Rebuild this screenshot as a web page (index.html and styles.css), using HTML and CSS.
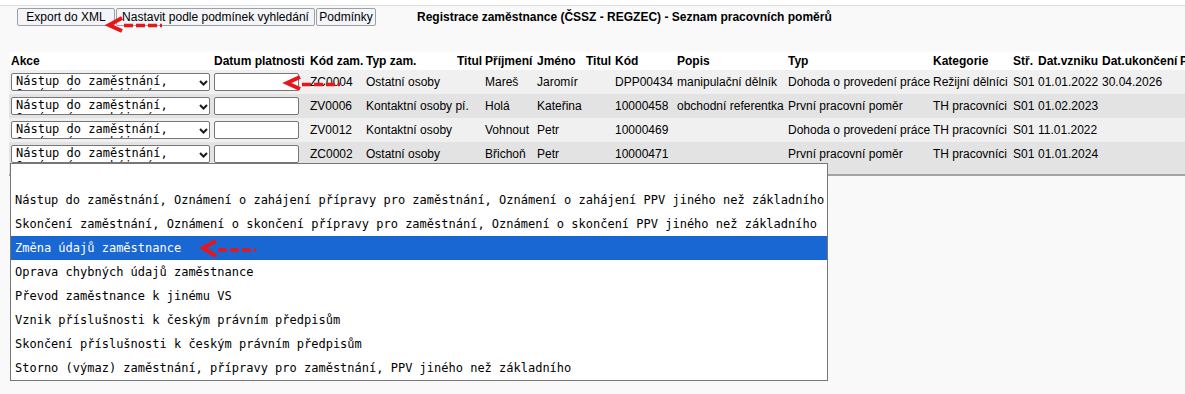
FILE: index.html
```html
<!DOCTYPE html>
<html>

<head>
    <meta charset="utf-8">
    <title>Registrace zaměstnance</title>
    <link rel="stylesheet" href="styles.css">
</head>

<body>
    <div class="topline"></div>

    <div class="toolbar">
        <button class="btn btnExport">Export do XML</button>
        <button class="btn btnFilter">Nastavit podle podmínek vyhledání</button>
        <button class="btn btnCond">Podmínky</button>
        <div class="title">Registrace zaměstnance (ČSSZ - REGZEC) - Seznam pracovních poměrů</div>
    </div>

    <div class="gridWrap">
        <table class="grid">
            <colgroup>
                <col class="cAkce">
                <col class="cDatum">
                <col class="cKodZam">
                <col class="cTyp">
                <col class="cTitul">
                <col class="cPrijmeni">
                <col class="cJmeno">
                <col class="cTitul2">
                <col class="cKod">
                <col class="cPopis">
                <col class="cTypPom">
                <col class="cKat">
                <col class="cStr">
                <col class="cVznik">
                <col class="cUkon">
                <col class="cRest">
            </colgroup>
            <thead>
                <tr>
                    <th>Akce</th>
                    <th>Datum platnosti</th>
                    <th>Kód zam.</th>
                    <th>Typ zam.</th>
                    <th>Titul</th>
                    <th>Příjmení</th>
                    <th>Jméno</th>
                    <th>Titul</th>
                    <th>Kód</th>
                    <th>Popis</th>
                    <th>Typ</th>
                    <th>Kategorie</th>
                    <th>Stř.</th>
                    <th>Dat.vzniku</th>
                    <th>Dat.ukončení</th>
                    <th>Poznámka</th>
                </tr>
            </thead>
            <tbody>
                <tr class="odd">
                    <td>
                        <div class="akce">
                            <span class="akceText">Nástup do zaměstnání, Oznámení o zahájení přípravy pro zaměstnání</span>
                            <svg class="chevron" width="9" height="6" viewBox="0 0 9 6"><path d="M1 1 L4.5 4.5 L8 1" fill="none" stroke="#1a1a1a" stroke-width="2"/></svg>
                        </div>
                    </td>
                    <td><div class="datum"></div></td>
                    <td>ZC0004</td>
                    <td>Ostatní osoby</td>
                    <td></td>
                    <td>Mareš</td>
                    <td>Jaromír</td>
                    <td></td>
                    <td>DPP00434</td>
                    <td>manipulační dělník</td>
                    <td>Dohoda o provedení práce</td>
                    <td>Režijní dělníci</td>
                    <td>S01</td>
                    <td>01.01.2022</td>
                    <td>30.04.2026</td>
                    <td></td>
                </tr>
                <tr class="even">
                    <td>
                        <div class="akce">
                            <span class="akceText">Nástup do zaměstnání, Oznámení o zahájení přípravy pro zaměstnání</span>
                            <svg class="chevron" width="9" height="6" viewBox="0 0 9 6"><path d="M1 1 L4.5 4.5 L8 1" fill="none" stroke="#1a1a1a" stroke-width="2"/></svg>
                        </div>
                    </td>
                    <td><div class="datum"></div></td>
                    <td>ZV0006</td>
                    <td>Kontaktní osoby pí.</td>
                    <td></td>
                    <td>Holá</td>
                    <td>Kateřina</td>
                    <td></td>
                    <td>10000458</td>
                    <td>obchodní referentka</td>
                    <td>První pracovní poměr</td>
                    <td>TH pracovníci</td>
                    <td>S01</td>
                    <td>01.02.2023</td>
                    <td></td>
                    <td></td>
                </tr>
                <tr class="odd">
                    <td>
                        <div class="akce">
                            <span class="akceText">Nástup do zaměstnání, Oznámení o zahájení přípravy pro zaměstnání</span>
                            <svg class="chevron" width="9" height="6" viewBox="0 0 9 6"><path d="M1 1 L4.5 4.5 L8 1" fill="none" stroke="#1a1a1a" stroke-width="2"/></svg>
                        </div>
                    </td>
                    <td><div class="datum"></div></td>
                    <td>ZV0012</td>
                    <td>Kontaktní osoby</td>
                    <td></td>
                    <td>Vohnout</td>
                    <td>Petr</td>
                    <td></td>
                    <td>10000469</td>
                    <td></td>
                    <td>Dohoda o provedení práce</td>
                    <td>TH pracovníci</td>
                    <td>S01</td>
                    <td>11.01.2022</td>
                    <td></td>
                    <td></td>
                </tr>
                <tr class="even last">
                    <td>
                        <div class="akce">
                            <span class="akceText">Nástup do zaměstnání, Oznámení o zahájení přípravy pro zaměstnání</span>
                            <svg class="chevron" width="9" height="6" viewBox="0 0 9 6"><path d="M1 1 L4.5 4.5 L8 1" fill="none" stroke="#1a1a1a" stroke-width="2"/></svg>
                        </div>
                    </td>
                    <td><div class="datum"></div></td>
                    <td>ZC0002</td>
                    <td>Ostatní osoby</td>
                    <td></td>
                    <td>Břichoň</td>
                    <td>Petr</td>
                    <td></td>
                    <td>10000471</td>
                    <td></td>
                    <td>První pracovní poměr</td>
                    <td>TH pracovníci</td>
                    <td>S01</td>
                    <td>01.01.2024</td>
                    <td></td>
                    <td></td>
                </tr>
            </tbody>
        </table>
    </div>

    <!-- otevreny seznam akci u posledniho radku -->
    <ul class="akceList">
        <li></li>
        <li>Nástup do zaměstnání, Oznámení o zahájení přípravy pro zaměstnání, Oznámení o zahájení PPV jiného než základního</li>
        <li>Skončení zaměstnání, Oznámení o skončení přípravy pro zaměstnání, Oznámení o skončení PPV jiného než základního</li>
        <li class="selected">Změna údajů zaměstnance</li>
        <li>Oprava chybných údajů zaměstnance</li>
        <li>Převod zaměstnance k jinému VS</li>
        <li>Vznik příslušnosti k českým právním předpisům</li>
        <li>Skončení příslušnosti k českým právním předpisům</li>
        <li>Storno (výmaz) zaměstnání, přípravy pro zaměstnání, PPV jiného než základního</li>
    </ul>

    <!-- cervene sipky (anotace) -->
    <svg class="marks" width="1185" height="394" viewBox="0 0 1185 394">
        <g fill="none" stroke="#e8161b">
            <polyline points="122,18 109,25 122,31" stroke-width="4" />
            <line x1="124" y1="25.5" x2="162" y2="25.5" stroke-width="3.5" stroke-dasharray="9 3" />
            <polyline points="300,77 287,83 300,89" stroke-width="4" />
            <line x1="302" y1="84.5" x2="340" y2="84.5" stroke-width="3.5" stroke-dasharray="9 3" />
            <polyline points="216,241 203,248 216,256" stroke-width="4" />
            <line x1="218" y1="250" x2="256" y2="250" stroke-width="3.5" stroke-dasharray="9 3" />
        </g>
    </svg>
</body>

</html>
```

FILE: styles.css
```css
html,
body {
    margin: 0;
    padding: 0;
    height: 100%;
    overflow: hidden;
}

body {
    position: relative;
    background-color: #f9f9f9;
    font-family: "Liberation Sans", Arial, sans-serif;
    font-size: 12px;
    color: #000;
}

.topline {
    height: 5px;
    background-color: #fff;
    border-bottom: 1px solid #dcdcdc;
}

.toolbar {
    display: flex;
    align-items: center;
    margin-top: 2px;
    padding-left: 17px;
    height: 18px;
}

.btn {
    height: 18px;
    margin: 0 1px 0 0;
    padding: 0;
    font-family: "Liberation Sans", Arial, sans-serif;
    font-size: 12px;
    color: #000;
    background-color: #f3f5f8;
    border: 1px solid #9ca0a6;
    border-radius: 2px;
    text-align: center;
}

.btnExport {
    width: 98px;
}

.btnFilter {
    width: 199px;
}

.btnCond {
    width: 60px;
}

.title {
    margin-left: 40px;
    font-weight: bold;
    font-size: 12px;
}

.gridWrap {
    margin-top: 26px;
    margin-left: 9px;
    width: 1176px;
    overflow: hidden;
    background-color: #fff;
    border-bottom: 2px solid #a3a3a3;
}

.grid {
    table-layout: fixed;
    border-collapse: collapse;
    border-spacing: 0;
    width: 1231px;
}

.grid th,
.grid td {
    padding: 0 2px;
    white-space: nowrap;
    text-align: left;
    vertical-align: middle;
}

.grid th {
    height: 18px;
    font-weight: bold;
}

.grid td {
    height: 24px;
}

.grid tr.odd {
    background-color: #f0f0f0;
}

.grid tr.even {
    background-color: #e3e3e3;
}

.grid tr.last td {
    height: 24px;
    padding-bottom: 8px;
}

.cAkce { width: 203px; }
.cDatum { width: 96px; }
.cKodZam { width: 56px; }
.cTyp { width: 91px; }
.cTitul { width: 28px; }
.cPrijmeni { width: 52px; }
.cJmeno { width: 49px; }
.cTitul2 { width: 29px; }
.cKod { width: 62px; }
.cPopis { width: 111px; }
.cTypPom { width: 145px; }
.cKat { width: 80px; }
.cStr { width: 25px; }
.cVznik { width: 64px; }
.cUkon { width: 78px; }
.cRest { width: 62px; }

.akce {
    display: flex;
    align-items: flex-start;
    width: 197px;
    height: 15px;
    overflow: hidden;
    background-color: #fff;
    border: 1px solid #767676;
    border-radius: 2px;
    padding-top: 1px;
}

.akceText {
    width: 180px;
    height: 15px;
    overflow: hidden;
    padding-left: 4px;
    font-family: "DejaVu Sans Mono", "Liberation Mono", monospace;
    font-size: 12px;
    line-height: 13px;
    white-space: normal;
    color: #000;
}

.chevron {
    margin: 5px 0 0 3px;
}

.datum {
    width: 83px;
    height: 16px;
    background-color: #fff;
    border: 1px solid #767676;
    border-radius: 2px;
}

.akceList {
    position: absolute;
    left: 10px;
    top: 163px;
    width: 816px;
    margin: 0;
    padding: 0;
    list-style: none;
    background-color: #fff;
    border: 1px solid #767676;
    font-family: "DejaVu Sans Mono", "Liberation Mono", monospace;
    font-size: 12px;
    z-index: 2;
}

.akceList li {
    height: 24px;
    line-height: 24px;
    padding-left: 4px;
    white-space: nowrap;
    overflow: hidden;
}

.akceList li.selected {
    background-color: #1967d2;
    color: #fff;
}

.marks {
    position: absolute;
    left: 0;
    top: 0;
    pointer-events: none;
    z-index: 3;
}
```
